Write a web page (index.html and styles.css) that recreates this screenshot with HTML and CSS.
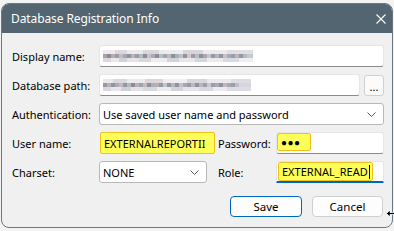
FILE: index.html
```html
<!DOCTYPE html>
<html>
<head>
<meta charset="utf-8">
<link rel="stylesheet" href="styles.css">
</head>
<body>
<div class="win">
  <div class="titlebar">
    <span class="title">Database Registration Info</span>
    <svg class="close" width="10" height="10" viewBox="0 0 10 10"><path d="M0.5 0.5L9.5 9.5M9.5 0.5L0.5 9.5" stroke="#fff" stroke-width="1.1" fill="none"/></svg>
  </div>
  <div class="body">
    <div class="row">
      <span class="label">Display name:</span>
      <div class="input grow"><span class="mosaic m1"></span></div>
    </div>
    <div class="row">
      <span class="label">Database path:</span>
      <div class="input grow"><span class="mosaic m2"></span></div>
      <div class="browse">...</div>
    </div>
    <div class="row">
      <span class="label">Authentication:</span>
      <div class="select grow"><span class="val">Use saved user name and password</span><svg class="chev" width="9" height="5" viewBox="0 0 9 5"><path d="M0.5 0.5L4.5 4.5L8.5 0.5" stroke="#5c5c5c" fill="none"/></svg></div>
    </div>
    <div class="grid">
      <span class="label">User name:</span>
      <div class="hl user"><span class="val">EXTERNALREPORTII</span></div>
      <span class="label side">Password:</span>
      <div class="input pw"><span class="hl dots">●●●</span></div>

      <span class="label">Charset:</span>
      <div class="select"><span class="val">NONE</span><svg class="chev" width="9" height="5" viewBox="0 0 9 5"><path d="M0.5 0.5L4.5 4.5L8.5 0.5" stroke="#5c5c5c" fill="none"/></svg></div>
      <span class="label side">Role:</span>
      <div class="input role"><span class="hl roletext">EXTERNAL_READ<span class="caret"></span></span></div>
    </div>
    <div class="buttons">
      <div class="btn save">Save</div>
      <div class="btn cancel">Cancel</div>
    </div>
  </div>
</div>
<svg class="cursor" width="10" height="9" viewBox="0 0 10 9"><path d="M0.5 4.5L4 1V3.5H10V5.5H4V8Z" fill="#000" stroke="#fff" stroke-width="0.8"/></svg>
</body>
</html>
```
FILE: styles.css
```css
html, body {
  margin: 0;
  padding: 0;
}
body {
  width: 394px;
  height: 231px;
  overflow: hidden;
  background: #f3f3f3;
  font-family: "Noto Sans", "Segoe UI", sans-serif;
  font-size: 11px;
  color: #000;
  position: relative;
}
.win {
  margin: 3px 0 0 1px;
  width: 392px;
  height: 225px;
  box-sizing: border-box;
  border: 1px solid #6b7880;
  border-radius: 8px;
  overflow: hidden;
  background: #f0f0f0;
  display: flex;
  flex-direction: column;
}
.titlebar {
  height: 29px;
  flex: none;
  background: #526570;
  color: #fff;
  display: flex;
  align-items: center;
  justify-content: space-between;
  padding: 0 6px 0 9px;
}
.title {
  font-size: 12px;
  letter-spacing: -0.1px;
}
.close {
  display: block;
}
.body {
  padding: 12px 8px 0 10px;
  display: flex;
  flex-direction: column;
  gap: 7px;
}
.row {
  display: flex;
  align-items: center;
  height: 22px;
}
.label {
  width: 87px;
  flex: none;
  white-space: nowrap;
}
.grow {
  flex: 1;
}
.input {
  height: 22px;
  box-sizing: border-box;
  background: #fff;
  border: 1px solid #e6e6e6;
  border-bottom-color: #8a8a8a;
  border-radius: 3px;
  display: flex;
  align-items: center;
  padding-left: 2px;
  position: relative;
}
.select {
  height: 22px;
  box-sizing: border-box;
  background: #fff;
  border: 1px solid #b8b8b8;
  border-radius: 3px;
  display: flex;
  align-items: center;
  justify-content: space-between;
  padding: 0 7px 0 3px;
  white-space: nowrap;
  font-size: 11px;
}
.chev {
  display: block;
}
.browse {
  width: 20px;
  height: 21px;
  margin-left: 4px;
  box-sizing: border-box;
  border: 1px solid #d0d0d0;
  border-radius: 3px;
  background: #fbfbfb;
  display: flex;
  align-items: flex-end;
  justify-content: center;
  padding-bottom: 4px;
  line-height: 8px;
  font-size: 11px;
}
.mosaic {
  display: block;
  width: 150px;
  height: 12px;
  margin-left: 1px;
  background-repeat: no-repeat;
  background-size: 100% 4px;
  background-position: 0 0, 0 4px, 0 8px;
}
.m1 {
  background-image:
    linear-gradient(90deg, #eeeaec 0 12px, #dcd6da 12px 24px, #ebe8ea 24px 40px, #dad6d8 40px 56px, #ecebec 56px 80px, #d8d4da 80px 100px, #ebe9ea 100px 124px, #e0dee2 124px 150px),
    linear-gradient(90deg, #aaa2aa 0 4px, #8e8a94 4px 8px, #b8aeb2 8px 12px, #9aa0aa 12px 16px, #c8bcc0 16px 20px, #a2a8b2 20px 24px, #8c929e 24px 28px, #bcb2b6 28px 32px, #969ca8 32px 36px, #b0bac4 36px 40px, #888e9a 40px 44px, #d0c0c4 44px 48px, #a6acb6 48px 52px, #928a96 52px 56px, #b4bec8 56px 60px, #a0a6b0 60px 64px, #c6bcc0 64px 68px, #8a92a0 68px 72px, #aab0ba 72px 76px, #bcc2cc 76px 80px, #96929e 80px 84px, #d2c8cc 84px 88px, #a29aa6 88px 92px, #b8bec8 92px 96px, #8e909c 96px 100px, #aaa6b0 100px 104px, #c2c6d0 104px 108px, #9a96a2 108px 112px, #b0b6c0 112px 116px, #9096a2 116px 120px, #cac0c4 120px 124px, #a6acb6 124px 128px, #989eaa 128px 132px, #bcb8c0 132px 136px, #9298a4 136px 140px, #b4bac4 140px 144px, #c8cad2 144px 150px),
    linear-gradient(90deg, #dcd8de 0 8px, #ebe8ea 8px 16px, #d0d2da 16px 24px, #e8e2e6 24px 36px, #d6d8de 36px 48px, #eeecee 48px 64px, #d0d4dc 64px 76px, #e8e6e8 76px 92px, #d4d6de 92px 104px, #ecebec 104px 120px, #d8dae2 120px 136px, #efeff1 136px 150px);
}
.m2 {
  width: 148px;
  background-image:
    linear-gradient(90deg, #ebe8ea 0 10px, #dad8de 10px 24px, #ece9ec 24px 42px, #dcd6da 42px 60px, #efedef 60px 84px, #d6d6dc 84px 104px, #eae8ea 104px 128px, #dcdce2 128px 148px),
    linear-gradient(90deg, #9c96a0 0 4px, #bcb2b6 4px 8px, #9096a0 8px 12px, #a8aeb8 12px 16px, #c6b8bc 16px 20px, #9298a4 20px 24px, #b0b8c2 24px 28px, #8e8a96 28px 32px, #bab2b8 32px 36px, #9ca4ae 36px 40px, #c8bcc0 40px 44px, #8c929e 44px 48px, #aab0ba 48px 52px, #b8aeb4 52px 56px, #949aa6 56px 60px, #c0c4cc 60px 64px, #9a94a0 64px 68px, #b2b8c2 68px 72px, #9094a0 72px 76px, #cabec2 76px 80px, #a4aab4 80px 84px, #969ca8 84px 88px, #bcb6be 88px 92px, #8e929e 92px 96px, #b4bac4 96px 100px, #a29ea8 100px 104px, #c4c8d0 104px 108px, #989eaa 108px 112px, #aea8b2 112px 116px, #8c929e 116px 120px, #c2b8bc 120px 124px, #a4aab4 124px 128px, #9aa0aa 128px 132px, #bcbec8 132px 136px, #d6d6dc 136px 148px),
    linear-gradient(90deg, #d8d8e0 0 8px, #e8e6ea 8px 18px, #d0d2da 18px 28px, #e4e2e6 28px 40px, #d6d8e0 40px 54px, #eceaec 54px 68px, #d2d4dc 68px 80px, #e6e4e8 80px 96px, #d8d8e0 96px 110px, #eceaec 110px 124px, #dcdce4 124px 148px);
}
.grid {
  display: grid;
  grid-template-columns: 87px 108px 69px 108px;
  row-gap: 7px;
  align-items: center;
}
.side {
  width: auto;
  padding-left: 11px;
}
.hl {
  background: #ffff5a;
  box-sizing: border-box;
  border: 1.5px solid #eec21a;
  border-radius: 2px;
}
.user {
  height: 22px;
  width: 115px;
  margin-left: 1px;
  display: flex;
  align-items: center;
  padding-left: 3px;
  overflow: hidden;
  white-space: nowrap;
  font-size: 11px;
  position: relative;
}
.val {
  white-space: nowrap;
}
.pw {
  height: 22px;
  padding: 0;
  align-items: stretch;
}
.dots {
  width: 34px;
  display: flex;
  align-items: center;
  padding-left: 3px;
  font-size: 10px;
  letter-spacing: 0.5px;
  margin: 0 0 2px 0;
}
.role {
  height: 22px;
  padding: 0;
  align-items: stretch;
  border-bottom: 2px solid #0067c0;
  border-radius: 3px 3px 1px 1px;
}
.roletext {
  display: flex;
  align-items: center;
  padding: 0 2px 0 3px;
  font-size: 11px;
  margin-left: 1px;
  white-space: nowrap;
}
.caret {
  display: inline-block;
  width: 1px;
  height: 14px;
  background: #000;
  margin-left: 1px;
}
.buttons {
  display: flex;
  justify-content: flex-end;
  gap: 10px;
  margin-top: 6px;
  padding-right: 1px;
}
.btn {
  height: 21px;
  box-sizing: border-box;
  border-radius: 4px;
  background: #fdfdfd;
  display: flex;
  align-items: center;
  justify-content: center;
  font-size: 11.5px;
}
.save {
  width: 72px;
  border: 1px solid #0067c0;
}
.cancel {
  width: 71px;
  border: 1px solid #d0d0d0;
}
.cursor {
  position: absolute;
  left: 386px;
  top: 209px;
  display: block;
}
```
